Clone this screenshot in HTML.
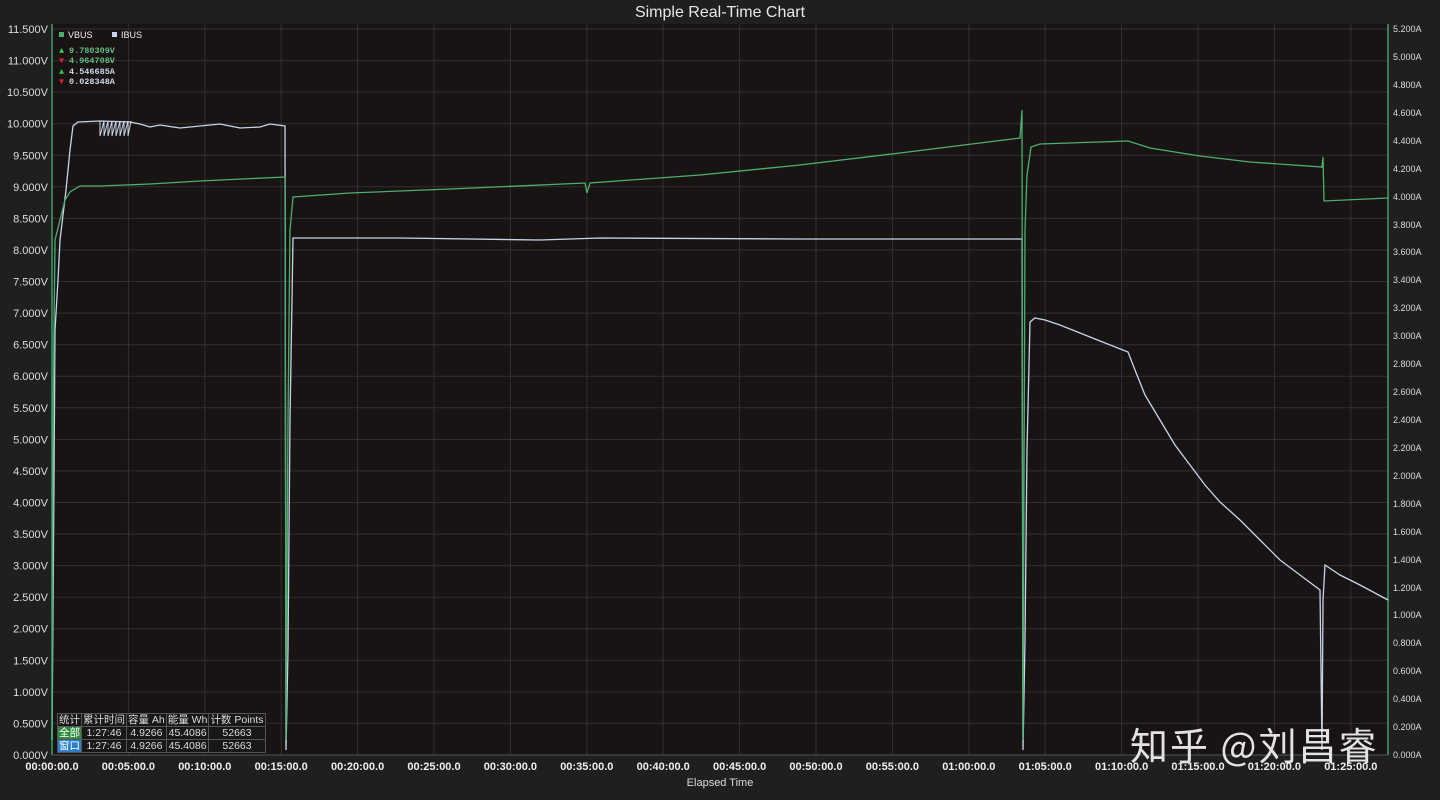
<!DOCTYPE html>
<html><head><meta charset="utf-8"><style>
body{margin:0;width:1440px;height:800px;background:#1f1f1f;overflow:hidden;font-family:"Liberation Sans","Noto Sans CJK SC",sans-serif}
svg{position:absolute;left:0;top:0}
.t{position:absolute;left:57px;top:713px;border-collapse:collapse;font-size:10.5px;color:#ddd;background:#1a1717}
.t td{border:1px solid #555;padding:0 1px;height:12px;line-height:12px;text-align:center;white-space:nowrap}
.wm{position:absolute;left:1130px;top:716px;font-size:38px;color:rgba(255,255,255,0.88);font-family:"Noto Sans CJK SC",sans-serif;letter-spacing:2px}
</style></head><body>
<svg width="1440" height="800" font-family="Liberation Sans, sans-serif">
<rect x="52" y="24" width="1336" height="731" fill="#181414"/>
<g stroke="#332f2f" stroke-width="1">
<path d="M52 29H1388M52 60.6H1388M52 92.1H1388M52 123.7H1388M52 155.3H1388M52 186.8H1388M52 218.4H1388M52 250H1388M52 281.5H1388M52 313.1H1388M52 344.7H1388M52 376.2H1388M52 407.8H1388M52 439.4H1388M52 470.9H1388M52 502.5H1388M52 534H1388M52 565.6H1388M52 597.2H1388M52 628.7H1388M52 660.3H1388M52 691.9H1388M52 723.4H1388"/>
<path d="M128.4 24V755M204.8 24V755M281.2 24V755M357.6 24V755M434 24V755M510.4 24V755M586.8 24V755M663.2 24V755M739.6 24V755M816 24V755M892.4 24V755M968.8 24V755M1045.2 24V755M1121.6 24V755M1198 24V755M1274.4 24V755M1350.8 24V755"/>
</g>
<path d="M52 24V755M1388 24V755" stroke="#3f9e6a" stroke-width="1.5"/>
<path d="M52 755H1388" stroke="#555"/>
<text x="720" y="17" fill="#e8e8e8" font-size="16" text-anchor="middle">Simple Real-Time Chart</text>
<text x="720" y="786" fill="#ddd" font-size="11" text-anchor="middle">Elapsed Time</text>
<g fill="#ddd" font-size="11" text-anchor="end">
<text x="48" y="33">11.500V</text><text x="48" y="64.6">11.000V</text><text x="48" y="96.1">10.500V</text><text x="48" y="127.7">10.000V</text><text x="48" y="159.3">9.500V</text><text x="48" y="190.8">9.000V</text><text x="48" y="222.4">8.500V</text><text x="48" y="254">8.000V</text><text x="48" y="285.5">7.500V</text><text x="48" y="317.1">7.000V</text><text x="48" y="348.7">6.500V</text><text x="48" y="380.2">6.000V</text><text x="48" y="411.8">5.500V</text><text x="48" y="443.4">5.000V</text><text x="48" y="474.9">4.500V</text><text x="48" y="506.5">4.000V</text><text x="48" y="538">3.500V</text><text x="48" y="569.6">3.000V</text><text x="48" y="601.2">2.500V</text><text x="48" y="632.7">2.000V</text><text x="48" y="664.3">1.500V</text><text x="48" y="695.9">1.000V</text><text x="48" y="727.4">0.500V</text><text x="48" y="759">0.000V</text>
</g>
<g fill="#ddd" font-size="9">
<text x="1393" y="32">5.200A</text><text x="1393" y="60">5.000A</text><text x="1393" y="88">4.800A</text><text x="1393" y="116">4.600A</text><text x="1393" y="144">4.400A</text><text x="1393" y="172">4.200A</text><text x="1393" y="200">4.000A</text><text x="1393" y="228">3.800A</text><text x="1393" y="255">3.600A</text><text x="1393" y="283">3.400A</text><text x="1393" y="311">3.200A</text><text x="1393" y="339">3.000A</text><text x="1393" y="367">2.800A</text><text x="1393" y="395">2.600A</text><text x="1393" y="423">2.400A</text><text x="1393" y="451">2.200A</text><text x="1393" y="479">2.000A</text><text x="1393" y="507">1.800A</text><text x="1393" y="535">1.600A</text><text x="1393" y="563">1.400A</text><text x="1393" y="591">1.200A</text><text x="1393" y="618">1.000A</text><text x="1393" y="646">0.800A</text><text x="1393" y="674">0.600A</text><text x="1393" y="702">0.400A</text><text x="1393" y="730">0.200A</text><text x="1393" y="758">0.000A</text>
</g>
<g fill="#eee" font-size="11" font-weight="bold" text-anchor="middle">
<text x="52" y="770">00:00:00.0</text><text x="128.4" y="770">00:05:00.0</text><text x="204.8" y="770">00:10:00.0</text><text x="281.2" y="770">00:15:00.0</text><text x="357.6" y="770">00:20:00.0</text><text x="434" y="770">00:25:00.0</text><text x="510.4" y="770">00:30:00.0</text><text x="586.8" y="770">00:35:00.0</text><text x="663.2" y="770">00:40:00.0</text><text x="739.6" y="770">00:45:00.0</text><text x="816" y="770">00:50:00.0</text><text x="892.4" y="770">00:55:00.0</text><text x="968.8" y="770">01:00:00.0</text><text x="1045.2" y="770">01:05:00.0</text><text x="1121.6" y="770">01:10:00.0</text><text x="1198" y="770">01:15:00.0</text><text x="1274.4" y="770">01:20:00.0</text><text x="1350.8" y="770">01:25:00.0</text>
</g>
<rect x="59" y="32" width="5" height="5" fill="#4caf6e"/><text x="68" y="38" fill="#eee" font-size="9">VBUS</text>
<rect x="112" y="32" width="5" height="5" fill="#c8d4e8"/><text x="121" y="38" fill="#eee" font-size="9">IBUS</text>
<g font-family="Liberation Mono, monospace" font-size="8.5" font-weight="bold">
<text x="59" y="53" fill="#2ecc40">▲</text><text x="69" y="53" fill="#5fbf7f">9.780309V</text>
<text x="59" y="63" fill="#dd2222">▼</text><text x="69" y="63" fill="#5fbf7f">4.964708V</text>
<text x="59" y="74" fill="#2ecc40">▲</text><text x="69" y="74" fill="#cfd6e6">4.546685A</text>
<text x="59" y="84" fill="#dd2222">▼</text><text x="69" y="84" fill="#cfd6e6">0.028348A</text>
</g>
<polyline fill="none" stroke="#c8d4e8" stroke-width="1.3" points="52,740 54,480 55,330 58,280 60,240 63,215 66,190 70,150 73,126 78,122 100,121 130,122 140,124 150,127 160,125 180,128 200,126 220,124 240,128 260,127 270,124 285,126 286,750 288,650 290,420 293,238 400,238 540,240 600,238 800,239 1022,239 1023,750 1025,640 1027,450 1030,322 1035,318 1045,320 1060,325 1080,333 1100,341 1128,352 1135,370 1145,395 1160,420 1175,445 1190,465 1205,485 1220,502 1240,520 1260,540 1280,560 1300,575 1320,590 1322,750 1323,600 1325,565 1340,575 1360,585 1388,600"/>
<polyline fill="none" stroke="#c8d4e8" stroke-width="1" points="100,121 100,136 104,121 104,136 108,121 108,136 112,121 112,136 116,121 116,136 120,121 120,136 124,121 124,136 128,121 128,136 131,121"/>
<polyline fill="none" stroke="#4caf6e" stroke-width="1.3" points="52,740 53,420 55,240 60,220 65,200 70,192 80,186 100,186 150,184 200,181 285,177 286,740 288,420 290,230 293,197 350,193 450,189 585,183 587,193 590,183 700,175 800,165 900,153 1020,138 1022,110 1023,740 1025,230 1027,175 1031,147 1040,144 1128,141 1150,148 1200,156 1250,162 1322,167 1323,157 1324,201 1388,198"/>
</svg>
<table class="t">
<tr><td>统计</td><td>累计时间</td><td>容量 Ah</td><td>能量 Wh</td><td>计数 Points</td></tr>
<tr><td style="background:#2e8b3e;color:#fff">全部</td><td>1:27:46</td><td>4.9266</td><td>45.4086</td><td>52663</td></tr>
<tr><td style="background:#2f7fd0;color:#fff">窗口</td><td>1:27:46</td><td>4.9266</td><td>45.4086</td><td>52663</td></tr>
</table>
<div class="wm">知乎 @刘昌睿</div>
</body></html>
